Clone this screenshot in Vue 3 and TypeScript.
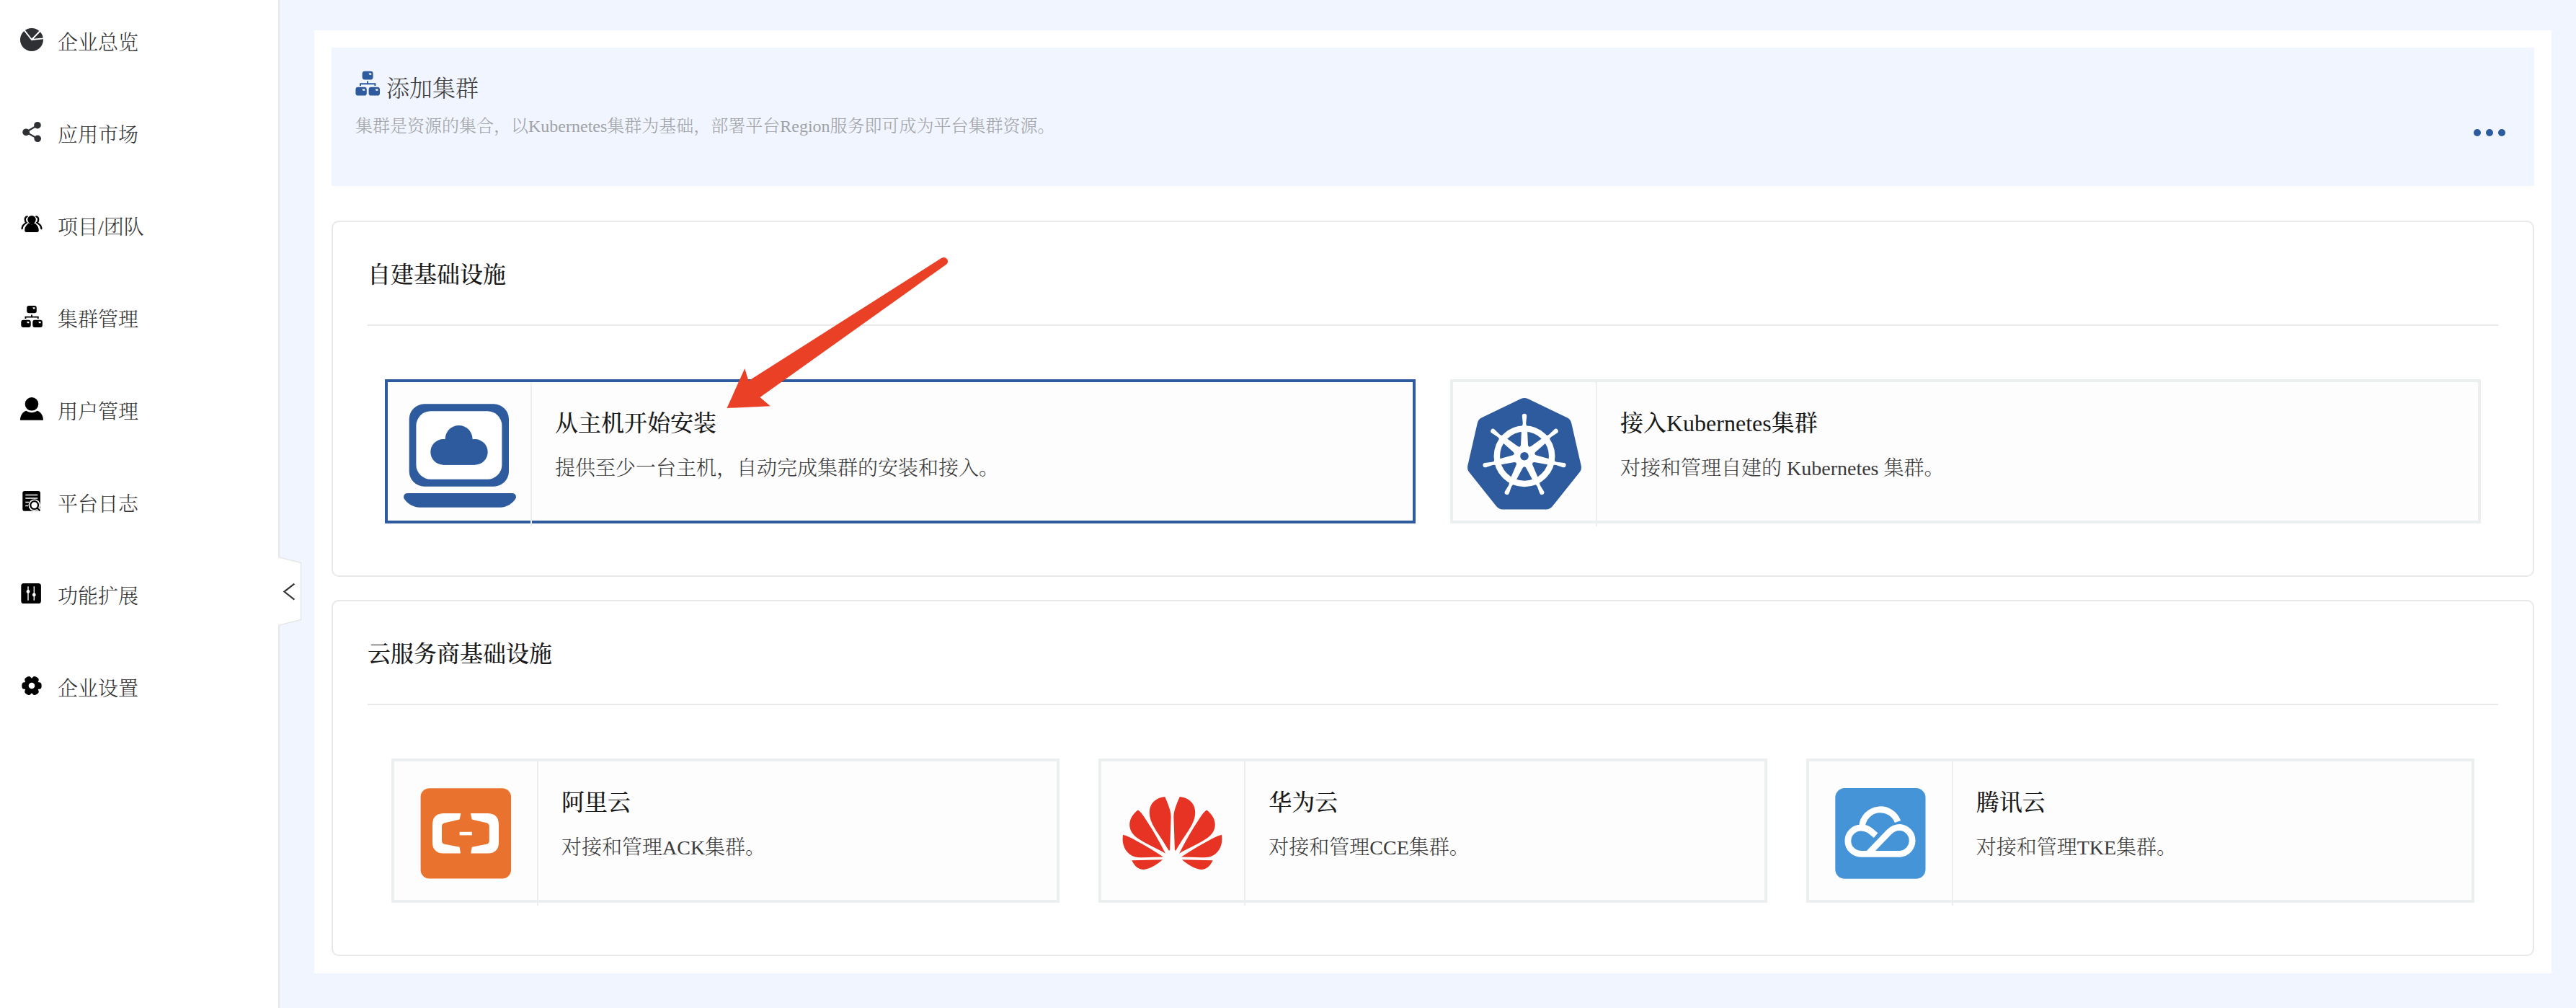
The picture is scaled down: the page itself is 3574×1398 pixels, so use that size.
<script setup lang="ts">
interface NavItem {
  key: string
  label: string
}
interface Provider {
  key: string
  title: string
  desc: string
  active?: boolean
}
interface Section {
  key: string
  title: string
  items: Provider[]
}

const nav: NavItem[] = [
  { key: 'overview', label: '企业总览' },
  { key: 'market', label: '应用市场' },
  { key: 'team', label: '项目/团队' },
  { key: 'cluster', label: '集群管理' },
  { key: 'user', label: '用户管理' },
  { key: 'log', label: '平台日志' },
  { key: 'extension', label: '功能扩展' },
  { key: 'setting', label: '企业设置' },
]

const sections: Section[] = [
  {
    key: 'self',
    title: '自建基础设施',
    items: [
      { key: 'host', title: '从主机开始安装', desc: '提供至少一台主机，自动完成集群的安装和接入。', active: true },
      { key: 'k8s', title: '接入Kubernetes集群', desc: '对接和管理自建的 Kubernetes 集群。' },
    ],
  },
  {
    key: 'cloud',
    title: '云服务商基础设施',
    items: [
      { key: 'ali', title: '阿里云', desc: '对接和管理ACK集群。' },
      { key: 'huawei', title: '华为云', desc: '对接和管理CCE集群。' },
      { key: 'tencent', title: '腾讯云', desc: '对接和管理TKE集群。' },
    ],
  },
]

// Points of a regular heptagon with one vertex pointing up
const heptagon = (cx: number, cy: number, r: number): string =>
  Array.from({ length: 7 }, (_, i) => {
    const a = (i * 2 * Math.PI) / 7
    return `${(cx + r * Math.sin(a)).toFixed(2)},${(cy - r * Math.cos(a)).toFixed(2)}`
  }).join(' ')

const spokes = Array.from({ length: 7 }, (_, i) => (i * 360) / 7)
const lobes = Array.from({ length: 6 }, (_, i) => 30 + i * 60)
</script>

<template>
  <div class="page">
    <aside class="sidebar">
      <nav class="menu">
        <a v-for="n in nav" :key="n.key" class="menu-item">
          <svg class="menu-icon" width="32" height="60" viewBox="0 0 32 60">
            <g v-if="n.key === 'overview'">
              <circle cx="16" cy="27" r="16" fill="#2e3033" />
              <path d="M4.4 12.4L16 27L29 13.5M16 27L33 25.3" fill="none" stroke="#fff" stroke-width="1.9" />
            </g>
            <g v-else-if="n.key === 'market'" fill="#2e3033">
              <path d="M24 17.7L8 27.3L24.3 36.3" fill="none" stroke="#2e3033" stroke-width="2.2" />
              <circle cx="24" cy="17.7" r="4.8" />
              <circle cx="8.2" cy="27.3" r="4.9" />
              <circle cx="24.2" cy="36.3" r="4.8" />
            </g>
            <g v-else-if="n.key === 'team'">
              <path d="M9.8 16.4Q6.8 17 6.8 20.2Q6.8 23.4 8.8 25Q3 27.6 2.6 33M22.2 16.4Q25.2 17 25.2 20.2Q25.2 23.4 23.2 25Q29 27.6 29.4 33" fill="none" stroke="#000" stroke-width="2.4" stroke-linecap="round" />
              <path d="M12.5 24H19.5C20 26.6 25.8 28 25.8 35.5Q25.8 38 23.5 38H8.5Q6.2 38 6.2 35.5C6.2 28 12 26.6 12.5 24Z" stroke="#fff" stroke-width="3" paint-order="stroke" />
              <circle cx="16" cy="20.6" r="5.7" stroke="#fff" stroke-width="2" paint-order="stroke" />
              <path d="M12.8 23.5H19.2V27H12.8Z" />
            </g>
            <g v-else-if="n.key === 'cluster'">
              <rect x="9.2" y="12" width="13.6" height="10.2" rx="3" />
              <rect x="1.3" y="31.8" width="13.4" height="10.2" rx="3" />
              <rect x="17.3" y="31.8" width="13.6" height="10.2" rx="3" />
              <path d="M16 24.5V27.7M7.4 30V27.7H24.8V30" fill="none" stroke="#000" stroke-width="1.8" />
              <path d="M17.2 14.2h3.4v2.2h-2.4zM9 34h3.4v2.2H10zM25.2 34h3.4v2.2h-2.4z" fill="#fff" />
            </g>
            <g v-else-if="n.key === 'user'">
              <circle cx="16" cy="20.3" r="9.3" />
              <path d="M0 42.7C0 37 3 31.5 8.2 29.8Q16 34.6 23.8 29.8C29 31.5 32 37 32 42.7Z" />
            </g>
            <g v-else-if="n.key === 'log'">
              <rect x="3.3" y="13" width="24.7" height="27.7" rx="2.8" />
              <path d="M7.3 18.5H24.3M7.3 23H24.3M7.3 28.5H12M7.3 33.4H11" stroke="#fff" stroke-width="1.5" />
              <circle cx="19.7" cy="32.6" r="8.2" fill="#fff" />
              <path d="M23.5 36.5L29 42" stroke="#fff" stroke-width="5" />
              <circle cx="19.7" cy="32.6" r="5.4" fill="none" stroke="#000" stroke-width="2.2" />
              <path d="M23.3 36.3L27.5 40.4" stroke="#000" stroke-width="2.2" />
            </g>
            <g v-else-if="n.key === 'extension'">
              <rect x="1.3" y="13" width="27.6" height="28" rx="3.6" />
              <path d="M11 17.3V36.7M19.3 17.3V36.7" stroke="#fff" stroke-width="1.4" />
              <circle cx="11" cy="24.4" r="2.4" fill="#fff" />
              <circle cx="19.3" cy="29" r="2.4" fill="#fff" />
            </g>
            <g v-else>
              <circle cx="16" cy="27" r="10.6" />
              <rect v-for="a in lobes" :key="a" x="11.2" y="13.4" width="9.6" height="9" rx="3.6" :transform="`rotate(${a} 16 27)`" />
              <circle cx="16" cy="27" r="4.3" fill="#fff" />
            </g>
          </svg>
          <span class="menu-label">{{ n.label }}</span>
        </a>
      </nav>
      <svg class="collapse" width="34" height="100" viewBox="0 0 34 100">
        <path d="M0 2.6L31.5 10.5V89.5L0 97.4Z" fill="#fff" />
        <path d="M0 2.6L31.5 10.5V89.5L0 97.4" fill="none" stroke="#e3e5e6" stroke-width="1.4" />
        <path d="M22.4 39.6L8.4 50.6L22.4 61.6" fill="none" stroke="#333" stroke-width="2.1" />
      </svg>
    </aside>

    <main class="main">
      <div class="panel">
        <header class="banner">
          <div class="banner-text">
            <div class="banner-title">
              <svg class="banner-icon" width="35" height="36" viewBox="0 0 35 36" fill="#2d5b9e">
                <rect x="9.6" y="0.8" width="15" height="11.6" rx="3.4" />
                <rect x="0.4" y="22.8" width="15.4" height="11.8" rx="3.4" />
                <rect x="18.6" y="22.8" width="15.4" height="11.8" rx="3.4" />
                <path d="M17 14.5V18.2M7 21V18.2H27.4V21" fill="none" stroke="#2d5b9e" stroke-width="2" />
                <path d="M18.4 3.4h3.8v2.4h-2.6zM9.4 25.4h3.8v2.4h-2.6zM27.6 25.4h3.8v2.4h-2.6z" fill="#fff" />
              </svg>
              <span>添加集群</span>
            </div>
            <p class="banner-desc">集群是资源的集合，以Kubernetes集群为基础，部署平台Region服务即可成为平台集群资源。</p>
          </div>
          <div class="more"><i /><i /><i /></div>
        </header>

        <section v-for="s in sections" :key="s.key" class="section">
          <h2 class="section-title">{{ s.title }}</h2>
          <div class="cards" :class="s.key">
            <article v-for="p in s.items" :key="p.key" class="card" :class="{ active: p.active }">
              <div class="logo">
                <svg width="198" height="192" viewBox="0 0 198 192">
                  <g v-if="p.key === 'host'" fill="#2d5b9e">
                    <rect x="29.7" y="30.3" width="138.3" height="114.4" rx="21" />
                    <rect x="39.4" y="40.3" width="119" height="94.4" rx="20" fill="#fff" />
                    <circle cx="77.1" cy="96.9" r="17.8" />
                    <circle cx="120.9" cy="96.9" r="17.8" />
                    <circle cx="98.6" cy="79" r="19" />
                    <rect x="79.6" y="79" width="38" height="35.7" />
                    <rect x="77" y="96" width="44" height="18.7" />
                    <path d="M28 154H172Q178 154 178 159.5C177.5 164 167 173.7 157 173.7H43.5C33 173.7 22.5 164 22 159.5Q22 154 28 154Z" />
                  </g>
                  <g v-else-if="p.key === 'k8s'">
                    <polygon :points="heptagon(99, 102.7, 69.7)" fill="#2d5b9e" stroke="#2d5b9e" stroke-width="22" stroke-linejoin="round" />
                    <circle cx="99" cy="102.7" r="38.2" fill="none" stroke="#fff" stroke-width="8.5" />
                    <g v-for="a in spokes" :key="a" :transform="`rotate(${a} 99 102.7)`" fill="#fff">
                      <path d="M95 66L94 87.5L92 91H106L104 87.5L103 66Z" />
                      <path d="M94.6 62Q96.8 60.5 96.8 57L95.8 47Q95.8 43.7 99 43.7Q102.2 43.7 102.2 47L101.2 57Q101.2 60.5 103.4 62Z" />
                    </g>
                    <polygon :points="heptagon(99, 102.7, 13.5)" fill="#fff" stroke="#fff" stroke-width="3" stroke-linejoin="round" />
                    <circle cx="99" cy="102.7" r="5.8" fill="#2d5b9e" />
                  </g>
                  <g v-else-if="p.key === 'ali'">
                    <rect x="36.6" y="37.2" width="125.4" height="125.4" rx="12" fill="#e9732e" />
                    <path d="M92.4 71.9H68Q53 72.5 53 88V112Q53 127 68 127.6H92L90.6 118.8L70 114.8Q66 114 66 110V90Q66 86.2 70 85.2L90.6 80.4Z" fill="#fff" />
                    <path d="M105.8 71.9H130.2Q145 72.5 145 88V112Q145 127 130.2 127.6H106.2L107.8 118.8L128 114.8Q131.8 114 131.8 110V90Q131.8 86.2 128 85.2L107.8 80.4Z" fill="#fff" />
                    <rect x="90.6" y="97.8" width="17.2" height="4.6" fill="#fff" />
                  </g>
                  <g v-else-if="p.key === 'huawei'" fill="#e63323">
                    <g v-for="m in [0, 1]" :key="m" :transform="m ? 'matrix(-1 0 0 1 197 0)' : undefined">
                      <path d="M108.8 49C121 50 130 58 130.2 70C130.5 87 118 98 103.4 123.6Q101.6 124 101.8 120L100.4 77C100.4 68 104.5 59 108.8 49Z" />
                      <path d="M146.3 67.6C153 73 157.6 79.5 157.8 87.5C158 96 152.5 102.5 146.3 106.8C135 114.5 121 120 108 127.7C116 112 125 96 135.2 80.7Q143 68.5 146.3 67.6Z" />
                      <path d="M167 101.7C167.6 107 167.6 111 166.4 115.5C163.5 126.5 155 132 146.7 133C135 133.6 123 132.6 111 132.6C123 124.5 139 115 153 107.5Q163 102.5 167 101.7Z" />
                      <path d="M111.8 136.3L154.7 137.3C151 145 146 150 138.5 150C130 149.5 120 143 111.8 136.3Z" />
                    </g>
                  </g>
                  <g v-else>
                    <rect x="36.3" y="37.1" width="125.2" height="125.6" rx="13" fill="#4594d7" />
                    <path d="M123 83.5A25.6 25.6 0 0 0 73.5 90M92.6 102.6L84 95.6Q79 92 72 92A18.1 18.1 0 0 0 72 128.3H126A18.5 18.5 0 0 0 126 91.4Q118 91.4 111.5 97.4L82 128" fill="none" stroke="#fff" stroke-width="8.8" />
                  </g>
                </svg>
              </div>
              <div class="info">
                <h3 class="card-title">{{ p.title }}</h3>
                <p class="card-desc">{{ p.desc }}</p>
              </div>
            </article>
          </div>
        </section>
      </div>
    </main>

    <svg class="arrow" width="320" height="220" viewBox="1000 350 320 220">
      <path d="M1008.5 566L1033.3 511L1038.5 528.3L1306 358Q1311.5 355.4 1314.2 359.5Q1316.6 364 1312.6 367L1054.5 551L1068.8 563.3Z" fill="#ea4126" />
    </svg>
  </div>
</template>

<style>
body {
  margin: 0;
  background: #f0f5ff;
}
</style>

<style scoped>
.page {
  position: relative;
  display: flex;
  width: 3574px;
  height: 1398px;
  background: #f0f5ff;
  font-family: 'Liberation Serif', 'Noto Serif CJK SC', 'Noto Sans CJK SC', serif;
  font-weight: 300;
  overflow: hidden;
}
h2,
h3,
p {
  margin: 0;
}
svg {
  display: block;
  flex: none;
}
.sidebar {
  position: relative;
  box-sizing: border-box;
  width: 388px;
  flex: none;
  background: #fff;
  border-right: 2px solid #e6e8e8;
}
.menu {
  display: flex;
  flex-direction: column;
  gap: 68px;
  padding: 28px 0 0 28px;
}
.menu-item {
  display: flex;
  align-items: center;
  gap: 20px;
  height: 60px;
}
.menu-label {
  padding-top: 4px;
  font-size: 28px;
  line-height: 60px;
  color: #333;
}
.collapse {
  position: absolute;
  left: 386px;
  top: 770px;
}
.main {
  flex: 1;
  padding: 42px 34px 48px 48px;
}
.panel {
  box-sizing: border-box;
  height: 1308px;
  padding: 24px;
  background: #fff;
}
.banner {
  display: flex;
  justify-content: space-between;
  box-sizing: border-box;
  height: 192px;
  margin-bottom: 48px;
  padding: 32px 40px 0 33px;
  background: #f0f5ff;
}
.banner-title {
  display: flex;
  gap: 8px;
  height: 48px;
  font-size: 32px;
  line-height: 50px;
  color: #3c3c3c;
}
.banner-desc {
  margin-top: 11px;
  font-size: 24px;
  line-height: 36px;
  color: #a0a2a5;
}
.more {
  display: flex;
  gap: 7px;
  padding-top: 81px;
}
.more i {
  width: 10px;
  height: 10px;
  border-radius: 50%;
  background: #2d5b9e;
}
.section {
  box-sizing: border-box;
  height: 494px;
  padding: 0 48px;
  border: 2px solid #e8e8e8;
  border-radius: 10px;
}
.section + .section {
  margin-top: 32px;
}
.section-title {
  box-sizing: border-box;
  height: 144px;
  border-bottom: 2px solid #e8e8e8;
  font-size: 32px;
  font-weight: 500;
  line-height: 146px;
  color: #1a1a1a;
}
.cards {
  display: flex;
  gap: 48px;
  padding: 74px 24px 0;
}
.cards.cloud {
  gap: 54px;
  padding: 74px 33px 0;
}
.card {
  display: flex;
  flex: 1;
  box-sizing: border-box;
  height: 200px;
  border: 4px solid #ebefef;
  background: #fdfdfd;
}
.card.active {
  border-color: #2d5b9e;
}
.logo {
  flex: none;
  width: 198px;
  height: 200px;
  border-right: 2px solid #ebefef;
}
.info {
  padding: 33px 0 0 32px;
}
.card-title {
  font-size: 32px;
  font-weight: 500;
  line-height: 48px;
  color: #1a1a1a;
}
.card-desc {
  margin-top: 18px;
  font-size: 28px;
  line-height: 42px;
  color: #3a3a3a;
}
.arrow {
  position: absolute;
  left: 1000px;
  top: 350px;
}
</style>
